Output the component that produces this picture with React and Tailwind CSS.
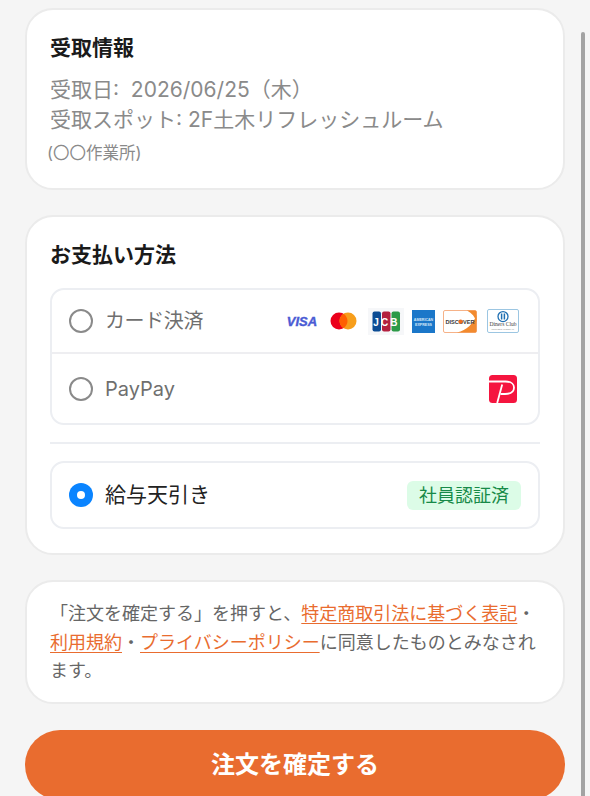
const font = { fontFamily: 'Inter, "Noto Sans CJK JP", sans-serif' };

function Radio({ checked }) {
  return checked ? (
    <span className="flex h-6 w-6 shrink-0 items-center justify-center rounded-full bg-[#0a84ff]">
      <span className="h-2 w-2 rounded-full bg-white" />
    </span>
  ) : (
    <span className="h-6 w-6 shrink-0 rounded-full border-2 border-[#8a8a8a] bg-white" />
  );
}

function Visa() {
  return (
    <svg width="32" height="16" viewBox="0 0 32 16">
      <text x="16" y="13" textAnchor="middle" fontFamily="Liberation Sans" fontWeight="700" fontStyle="italic" fontSize="13" stroke="#4a5bd4" strokeWidth="0.4" fill="#4a5bd4">VISA</text>
    </svg>
  );
}
function Master() {
  return (
    <svg width="27" height="18" viewBox="0 0 27 18">
      <circle cx="9" cy="9" r="8.5" fill="#eb001b" />
      <circle cx="18" cy="9" r="8.5" fill="#f79e1b" />
      <path d="M13.5 1.8a8.5 8.5 0 0 1 0 14.4a8.5 8.5 0 0 1 0-14.4z" fill="#ff5f00" />
    </svg>
  );
}
function Jcb() {
  return (
    <svg width="36" height="27" viewBox="0 0 36 27">
      <rect width="36" height="27" fill="#f6f7f9" />
      <rect x="4.5" y="3.5" width="8.5" height="20" rx="2" fill="#0b4c94" />
      <rect x="14" y="3.5" width="8.5" height="20" rx="2" fill="#b3203f" />
      <rect x="23.5" y="3.5" width="8.5" height="20" rx="2" fill="#2c9a48" />
      <text x="18.5" y="17.5" textAnchor="middle" fontFamily="Liberation Sans" fontWeight="700" fontSize="10" letterSpacing="2.2" fill="#fff">JCB</text>
    </svg>
  );
}
function Amex() {
  return (
    <svg width="23" height="23" viewBox="0 0 23 23">
      <rect width="23" height="23" fill="#1b77c9" />
      <text x="11.5" y="11" textAnchor="middle" fontFamily="Liberation Sans" fontWeight="700" fontSize="3.6" fill="#d5e8f8">AMERICAN</text>
      <text x="11.5" y="15.5" textAnchor="middle" fontFamily="Liberation Sans" fontWeight="700" fontSize="3.6" fill="#d5e8f8">EXPRESS</text>
    </svg>
  );
}
function Discover() {
  return (
    <svg width="34" height="23" viewBox="0 0 34 23">
      <rect x="0.5" y="0.5" width="33" height="22" rx="1.5" fill="#fff" stroke="#f6b288" />
      <path d="M14 22.5C24 20 30 14 33.5 5V21a1.5 1.5 0 0 1-1.5 1.5z" fill="#f28a2e" />
      <path d="M24 0.5H32a1.5 1.5 0 0 1 1.5 1.5V12C32 7 29 3 24 0.5z" fill="#f28a2e" />
      <text x="17" y="13.6" textAnchor="middle" fontFamily="Liberation Sans" fontWeight="700" fontSize="5.6" fill="#3a3a3a">DISCOVER</text>
      <circle cx="17.6" cy="11.6" r="2.2" fill="#ef6c1f" />
    </svg>
  );
}
function Diners() {
  return (
    <svg width="32" height="24" viewBox="0 0 32 24">
      <rect x="0.5" y="0.5" width="31" height="23" rx="1.5" fill="#fff" stroke="#9cc6e2" />
      <circle cx="16" cy="7.6" r="5" fill="#fff" stroke="#1f6fb2" strokeWidth="1.3" />
      <path d="M14.6 4.6v6M17.4 4.6v6" stroke="#1f6fb2" strokeWidth="1.5" />
      <text x="16" y="17.4" textAnchor="middle" fontFamily="Liberation Serif" fontSize="5.6" fill="#444">Diners Club</text>
      <text x="16" y="21.4" textAnchor="middle" fontFamily="Liberation Serif" fontSize="2.9" fill="#444">INTERNATIONAL</text>
    </svg>
  );
}
function PayPayLogo() {
  return (
    <svg width="28" height="28" viewBox="0 0 28 28">
      <rect width="28" height="28" rx="3.5" fill="#f5153f" />
      <path d="M0 6.5H16.5C23 6.5 25 10 25 12.5C25 17 21 19 16 19H11.5" fill="none" stroke="#fff" strokeWidth="1.8" />
      <path d="M13.2 9.5 8.2 28" fill="none" stroke="#fff" strokeWidth="1.8" />
    </svg>
  );
}

function Card({ className, children }) {
  return (
    <section className={`mx-[25px] rounded-[28px] border-2 border-[#ebebeb] bg-white ${className}`}>
      {children}
    </section>
  );
}

function Link({ children }) {
  return <span className="text-[#e96c2f] underline underline-offset-[3px]">{children}</span>;
}

export default function App() {
  return (
    <div className="relative h-[796px] w-[590px] overflow-hidden bg-[#f5f5f5] pt-2" style={font}>
      <Card className="h-[182px] px-[23px] pt-[21px]">
        <h2 className="text-[21px] leading-[34px] font-bold text-[#1a1a1a]">受取情報</h2>
        <div className="mt-[10px] text-[21px] leading-[30px] text-[#8a8a8a]">
          <p>受取日:&nbsp; 2026/06/25（木）</p>
          <p>受取スポット: 2F土木リフレッシュルーム</p>
        </div>
        <p className="mt-[6px] -ml-[3px] text-[16.5px] leading-[24px] text-[#8a8a8a]">(〇〇作業所)</p>
      </Card>

      <Card className="mt-[25px] h-[340px] px-[23px] pt-[21px]">
        <h2 className="text-[21px] leading-[34px] font-bold text-[#1a1a1a]">お支払い方法</h2>
        <div className="mt-[16px] overflow-hidden rounded-[14px] border-2 border-[#eceef2]">
          <div className="flex h-[64px] items-center justify-between border-b-2 border-[#eeeef1] pr-[19px] pl-[17px]">
            <div className="flex items-center gap-3">
              <Radio />
              <span className="text-[20px] tracking-[-0.4px] text-[#6f6f6f]">カード決済</span>
            </div>
            <div className="flex items-center">
              <Visa />
              <span className="ml-[12px]"><Master /></span>
              <span className="ml-[11px]"><Jcb /></span>
              <span className="ml-[8px]"><Amex /></span>
              <span className="ml-[8px]"><Discover /></span>
              <span className="ml-[10px]"><Diners /></span>
            </div>
          </div>
          <div className="flex h-[69px] items-center justify-between pr-[21px] pl-[17px]">
            <div className="flex items-center gap-3">
              <Radio />
              <span className="text-[20px] text-[#6f6f6f]">PayPay</span>
            </div>
            <PayPayLogo />
          </div>
        </div>
        <div className="mt-[17px] h-0.5 bg-[#eceef2]" />
        <div className="mt-[17px] flex h-[68px] items-center justify-between rounded-[14px] border-2 border-[#eceef2] pr-[17px] pl-[17px]">
          <div className="flex items-center gap-3">
            <Radio checked />
            <span className="text-[21px] text-[#222222]">給与天引き</span>
          </div>
          <span className="flex h-[29px] w-[114px] items-center justify-center rounded-md bg-[#dcfce7] text-[18px] text-[#178a48]">社員認証済</span>
        </div>
      </Card>

      <Card className="mt-[25px] h-[124px] px-[23px] pt-[18px]">
        <p className="w-[490px] text-[18px] leading-[28.5px] text-[#666666]">
          「注文を確定する」を押すと、<Link>特定商取引法に基づく表記</Link>・<Link>利用規約</Link>・<Link>プライバシーポリシー</Link>に同意したものとみなされます。
        </p>
      </Card>

      <button className="mx-[25px] mt-[26px] flex h-[70px] w-[540px] items-center justify-center rounded-full bg-[#e96c2f] text-[24px] font-bold text-white">
        注文を確定する
      </button>

      <div className="absolute top-[32px] right-[5px] h-[780px] w-[4px] rounded-full bg-[#a3a3a3]" />
    </div>
  );
}
